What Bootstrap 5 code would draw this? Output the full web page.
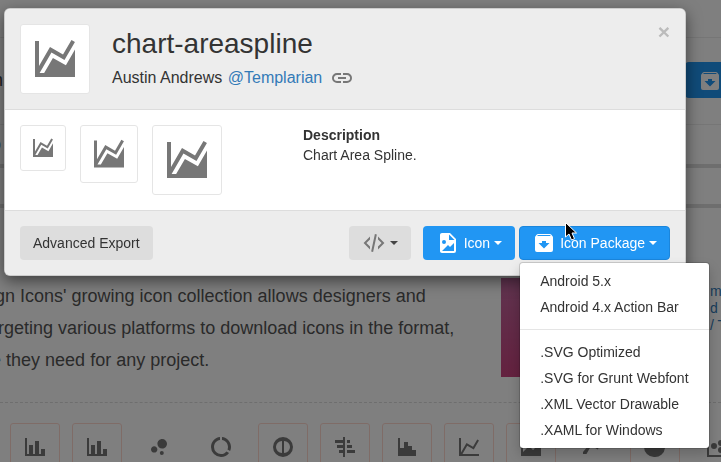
<!DOCTYPE html>
<html lang="en">
<head>
<meta charset="utf-8">
<title>chart-areaspline</title>
<link href="https://cdn.jsdelivr.net/npm/bootstrap@5.3.0/dist/css/bootstrap.min.css" rel="stylesheet">
<style>
html,body{height:462px;overflow:hidden;margin:0}
body{font-family:"Liberation Sans",Arial,sans-serif;font-size:14px;line-height:20px;color:#333;background:#fff}
svg{fill:currentColor;flex:none;display:block}
.page-under{height:462px;overflow:hidden}
.strip-top{height:38px;border-bottom:1px solid #ededed}
.strip-hero{height:87px;border-bottom:1px solid #ededed;font-size:18px;color:#444}
.edge-word{margin-left:-12px;margin-top:32px}
.edge-word2{margin-left:-9px}
.blue-tab{width:36px;height:36px;margin-top:24px;background:#2196f3;border-radius:4px 0 0 4px;color:#fff;padding:7px 0 0 13px}
.strip-plain{height:39px;font-size:18px;color:#444;padding-top:9px}
.band-a{height:4px;background:#dcdcdc}
.strip-b{height:36px}
.strip-c{height:68px}
.intro-row{height:126px;position:relative}
.intro-text{margin:0 0 0 -110px;width:610px;white-space:nowrap;font-size:18px;line-height:32px;color:#555;padding-top:4px;flex:none}
.pink-ad{width:130px;height:99px;margin-left:1px;margin-top:2px;background:linear-gradient(#c0689f,#c8437f);flex:none}
.ad-words{margin-left:79px;padding-top:7px;font-size:14px;line-height:17px;color:#337ab7;white-space:nowrap}
.dash-line{border-top:1px dashed #ddd}
.icon-rows{padding:20px 0 0 10px;gap:12px}
.glyph-cell{width:50px;height:50px;flex:none;border:1px solid transparent;border-radius:3px;padding:11px 12px;color:#777}
.glyph-cell.ruled{border-color:#ffd8cf}

.sheet-wrap{position:absolute;left:4px;top:8px;width:682px;z-index:1060}
.sheet{border:1px solid rgba(0,0,0,.2);border-radius:6px;box-shadow:0 5px 15px rgba(0,0,0,.5);background:#fff}
.sheet-head{background:#ededed;border-bottom:1px solid #ddd;padding:15px;border-radius:5px 5px 0 0;height:101px;gap:22px}
.tile{background:#fff;border:1px solid #e5e5e5;border-radius:3px;color:#777;display:flex;align-items:center;justify-content:center;flex:none}
.tile-24{width:46px;height:46px}
.tile-36{width:58px;height:58px}
.tile-48{width:70px;height:70px}
.sheet-title{font-size:28px;line-height:30px;margin:5px 0 0;font-weight:400;color:#333}
.author-line{font-size:16px;line-height:24px;margin-top:7px;color:#333}
.author-line a{color:#337ab7;text-decoration:none;margin-left:1px}
.author-line svg{color:#777;margin-left:8px}
.shut{font-size:21px;line-height:21px;font-weight:700;color:#bbb;margin:-3px 0 0 auto;background:none;border:0;padding:0;align-self:flex-start}
.sheet-body{height:101px;padding:15px;border-bottom:1px solid #ddd;gap:14px}
.desc-col{margin-left:67px}
.desc-col b{display:block}
.sheet-foot{background:#ededed;padding:15px;height:64px;border-radius:0 0 5px 5px}
.act{font-size:14px;line-height:24px;padding:4px 12px;border:1px solid transparent;border-radius:4px;display:inline-flex;align-items:center;height:34px}
.act-grey,.act-grey:hover{background:#ddd;color:#333}
.act-code,.act-code:hover{background:#ddd;color:#777}
.act-code.dropdown-toggle::after{color:#444}
.act-blue,.act-blue:hover{background:#2196f3;color:#fff;margin-left:12px}
.act-open,.act-open:hover{background:#2196f3;color:#fff;border-color:#1b86dc}
.act .ic-gap{margin-right:4px}
.act.dropdown-toggle::after{margin-left:4px;border-top:4px solid;border-right:4px solid transparent;border-left:4px solid transparent;border-bottom:0;vertical-align:middle;display:inline-block}
.pack-menu{position:absolute;top:100%;left:0;margin-top:2px;padding:5px 0;font-size:14px;border-radius:4px;border:1px solid rgba(0,0,0,.15);box-shadow:0 6px 12px rgba(0,0,0,.175);min-width:160px}
.pack-menu .dropdown-item{padding:3px 20px;line-height:20px;color:#333}
.pack-menu .dropdown-divider{margin:9px 0;border-top:1px solid #e5e5e5;opacity:1}
.pointer-mark{position:absolute;left:565px;top:222px;z-index:1100;fill:#000;stroke:#fff;stroke-width:1}
</style>
</head>
<body>
<div class="page-under">
  <div class="strip-top"></div>
  <div class="strip-hero d-flex justify-content-between">
    <div class="edge-word">m</div>
    <div class="blue-tab"><svg width="24" height="24" viewBox="0 0 24 24"><path d="M5.12,5L5.93,4H17.93L18.87,5M12,17.5L6.5,12H10V10H14V12H17.5L12,17.5M20.54,5.23L19.15,3.55C18.88,3.21 18.47,3 18,3H6C5.53,3 5.12,3.21 4.84,3.55L3.46,5.23C3.17,5.57 3,6 3,6.5V19A2,2 0 0,0 5,21H19A2,2 0 0,0 21,19V6.5C21,6 20.83,5.57 20.54,5.23Z"/></svg></div>
  </div>
  <div class="strip-plain"><div class="edge-word2">b</div></div>
  <div class="band-a"></div>
  <div class="strip-b"></div>
  <div class="band-a"></div>
  <div class="strip-c"></div>
  <div class="intro-row d-flex">
    <p class="intro-text">Material Design Icons' growing icon collection allows designers and<br>developers targeting various platforms to download icons in the format,<br>color and size they need for any project.</p>
    <div class="pink-ad"></div>
    <div class="ad-words">m<br>d s<br>/ T</div>
  </div>
  <div class="dash-line"></div>
  <div class="icon-rows d-flex">
    <div class="glyph-cell ruled"><svg width="24" height="24" viewBox="0 0 24 24"><path d="M22,21H2V3H4V19H6V10H10V19H12V6H16V19H18V14H22V21Z"/></svg></div>
    <div class="glyph-cell ruled"><svg width="24" height="24" viewBox="0 0 24 24"><path d="M22,21H2V3H4V19H6V10H10V19H12V6H16V19H18V14H22V21Z M7,12H9V14H7Z M13,9H15V11H13Z"/></svg></div>
    <div class="glyph-cell"><svg width="24" height="24" viewBox="0 0 24 24"><path d="M7.2,11.2C8.97,11.2 10.4,12.63 10.4,14.4C10.4,16.17 8.97,17.6 7.2,17.6C5.43,17.6 4,16.17 4,14.4C4,12.63 5.43,11.2 7.2,11.2M14.8,16A2,2 0 0,1 16.8,18A2,2 0 0,1 14.8,20A2,2 0 0,1 12.8,18A2,2 0 0,1 14.8,16M15.2,4A4.8,4.8 0 0,1 20,8.8C20,11.45 17.85,13.6 15.2,13.6A4.8,4.8 0 0,1 10.4,8.8C10.4,6.15 12.55,4 15.2,4Z"/></svg></div>
    <div class="glyph-cell"><svg width="24" height="24" viewBox="0 0 24 24"><path d="M13,2.05V5.08C16.39,5.57 19,8.47 19,12C19,12.9 18.82,13.75 18.5,14.54L21.12,16.07C21.68,14.83 22,13.45 22,12C22,6.82 18.05,2.55 13,2.05M12,19A7,7 0 0,1 5,12C5,8.47 7.61,5.57 11,5.08V2.05C5.94,2.55 2,6.81 2,12A10,10 0 0,0 12,22C15.3,22 18.23,20.39 20.05,17.91L17.45,16.38C16.17,18 14.21,19 12,19Z"/></svg></div>
    <div class="glyph-cell ruled"><svg width="24" height="24" viewBox="0 0 24 24"><path fill-rule="evenodd" d="M12,2A10,10 0 1,1 12,22A10,10 0 1,1 12,2M11,6A6,6 0 0,0 11,18ZM13,6V18A6,6 0 0,0 13,6Z"/></svg></div>
    <div class="glyph-cell ruled"><svg width="24" height="24" viewBox="0 0 24 24"><path d="M2,5H10V2H12V22H10V18H6V15H10V13H4V10H10V8H2V5M14,5H17V8H14V5M14,10H19V13H14V10M14,15H22V18H14V15Z"/></svg></div>
    <div class="glyph-cell ruled"><svg width="24" height="24" viewBox="0 0 24 24"><path d="M3,3H5V13H9V7H13V11H17V15H21V21H3V3Z"/></svg></div>
    <div class="glyph-cell ruled"><svg width="24" height="24" viewBox="0 0 24 24"><path d="M16,11.78L20.24,4.45L21.97,5.45L16.74,14.5L10.23,10.75L5.46,19H22V21H2V3H4V17.54L9.5,8L16,11.78Z"/></svg></div>
    <div class="glyph-cell ruled"><svg width="24" height="24" viewBox="0 0 24 24"><path d="M2,3H22V21H2Z M4,5V17L10,11L14,15L20,9V5Z"/></svg></div>
    <div class="glyph-cell"><svg width="24" height="24" viewBox="0 0 24 24"><path d="M16,11.78L20.24,4.45L21.97,5.45L16.74,14.5L10.23,10.75L5.46,19H2V17L9.5,8Z"/></svg></div>
    <div class="glyph-cell ruled"><svg width="24" height="24" viewBox="0 0 24 24"><path d="M11,2V13H22A10,10 0 0,1 11,22A10,10 0 0,1 11,2M13,2A10,10 0 0,1 22,11H13V2Z"/></svg></div>
    <div class="glyph-cell"><svg width="24" height="24" viewBox="0 0 24 24"><path d="M2,2H4V20H22V22H2ZM9,8A3,3 0 1,1 9,14A3,3 0 1,1 9,8M16,5A3,3 0 1,1 16,11A3,3 0 1,1 16,5M16,12A3,3 0 1,1 16,18A3,3 0 1,1 16,12Z"/></svg></div>
  </div>
</div>

<div class="modal-backdrop show"></div>

<div class="sheet-wrap">
  <div class="sheet">
    <div class="sheet-head d-flex">
      <div class="tile tile-48"><svg width="48" height="48" viewBox="0 0 24 24"><path d="M17.45,15.18L22,7.31V19L22,21H2V3H4V15.54L9.5,6L16,9.78L20.24,2.45L21.97,3.45L16.74,12.5L10.23,8.75L4.31,19H6.57L10.96,11.44L17.45,15.18Z"/></svg></div>
      <div>
        <h1 class="sheet-title">chart-areaspline</h1>
        <div class="author-line d-flex align-items-center">Austin Andrews&nbsp;<a href="#">@Templarian</a><svg width="24" height="24" viewBox="0 0 24 24"><path d="M3.9,12C3.9,10.29 5.29,8.9 7,8.9H11V7H7A5,5 0 0,0 2,12A5,5 0 0,0 7,17H11V15.1H7C5.29,15.1 3.9,13.71 3.9,12M8,13H16V11H8V13M17,7H13V8.9H17C18.71,8.9 20.1,10.29 20.1,12C20.1,13.71 18.71,15.1 17,15.1H13V17H17A5,5 0 0,0 22,12A5,5 0 0,0 17,7Z"/></svg></div>
      </div>
      <button type="button" class="shut">×</button>
    </div>
    <div class="sheet-body d-flex align-items-start">
      <div class="tile tile-24"><svg width="24" height="24" viewBox="0 0 24 24"><path d="M17.45,15.18L22,7.31V19L22,21H2V3H4V15.54L9.5,6L16,9.78L20.24,2.45L21.97,3.45L16.74,12.5L10.23,8.75L4.31,19H6.57L10.96,11.44L17.45,15.18Z"/></svg></div>
      <div class="tile tile-36"><svg width="36" height="36" viewBox="0 0 24 24"><path d="M17.45,15.18L22,7.31V19L22,21H2V3H4V15.54L9.5,6L16,9.78L20.24,2.45L21.97,3.45L16.74,12.5L10.23,8.75L4.31,19H6.57L10.96,11.44L17.45,15.18Z"/></svg></div>
      <div class="tile tile-48"><svg width="48" height="48" viewBox="0 0 24 24"><path d="M17.45,15.18L22,7.31V19L22,21H2V3H4V15.54L9.5,6L16,9.78L20.24,2.45L21.97,3.45L16.74,12.5L10.23,8.75L4.31,19H6.57L10.96,11.44L17.45,15.18Z"/></svg></div>
      <div class="desc-col"><b>Description</b>Chart Area Spline.</div>
    </div>
    <div class="sheet-foot d-flex align-items-start">
      <button type="button" class="btn act act-grey me-auto">Advanced Export</button>
      <button type="button" class="btn act act-code dropdown-toggle"><svg width="24" height="24" viewBox="0 0 24 24"><path d="M12.89,3L14.85,3.4L11.11,21L9.15,20.6L12.89,3M19.59,12L16,8.41V5.58L22.42,12L16,18.41V15.58L19.59,12M1.58,12L8,5.58V8.41L4.41,12L8,15.58V18.41L1.58,12Z"/></svg></button>
      <button type="button" class="btn act act-blue dropdown-toggle"><svg class="ic-gap" width="24" height="24" viewBox="0 0 24 24"><path d="M13,9H18.5L13,3.5V9M6,2H14L20,8V20A2,2 0 0,1 18,22H6C4.89,22 4,21.1 4,20V4C4,2.89 4.89,2 6,2M6,20H15L18,20V12L14,16L12,14L6,20M8,9A2,2 0 0,0 6,11A2,2 0 0,0 8,13A2,2 0 0,0 10,11A2,2 0 0,0 8,9Z"/></svg>Icon</button>
      <div class="position-relative ms-1">
        <button type="button" class="btn act act-open dropdown-toggle"><svg class="ic-gap" width="24" height="24" viewBox="0 0 24 24"><path d="M5.12,5L5.93,4H17.93L18.87,5M12,17.5L6.5,12H10V10H14V12H17.5L12,17.5M20.54,5.23L19.15,3.55C18.88,3.21 18.47,3 18,3H6C5.53,3 5.12,3.21 4.84,3.55L3.46,5.23C3.17,5.57 3,6 3,6.5V19A2,2 0 0,0 5,21H19A2,2 0 0,0 21,19V6.5C21,6 20.83,5.57 20.54,5.23Z"/></svg>Icon Package</button>
        <ul class="dropdown-menu show pack-menu">
          <li><a class="dropdown-item" href="#">Android 5.x</a></li>
          <li><a class="dropdown-item" href="#">Android 4.x Action Bar</a></li>
          <li><hr class="dropdown-divider"></li>
          <li><a class="dropdown-item" href="#">.SVG Optimized</a></li>
          <li><a class="dropdown-item" href="#">.SVG for Grunt Webfont</a></li>
          <li><a class="dropdown-item" href="#">.XML Vector Drawable</a></li>
          <li><a class="dropdown-item" href="#">.XAML for Windows</a></li>
        </ul>
      </div>
    </div>
  </div>
</div>

<svg class="pointer-mark" width="14" height="20" viewBox="0 0 14 20"><path d="M.5.5V15L4,12L6.5,18L9.5,16.7L7,11H11.5Z"/></svg>
<script src="https://cdn.jsdelivr.net/npm/bootstrap@5.3.0/dist/js/bootstrap.bundle.min.js"></script>
</body>
</html>
